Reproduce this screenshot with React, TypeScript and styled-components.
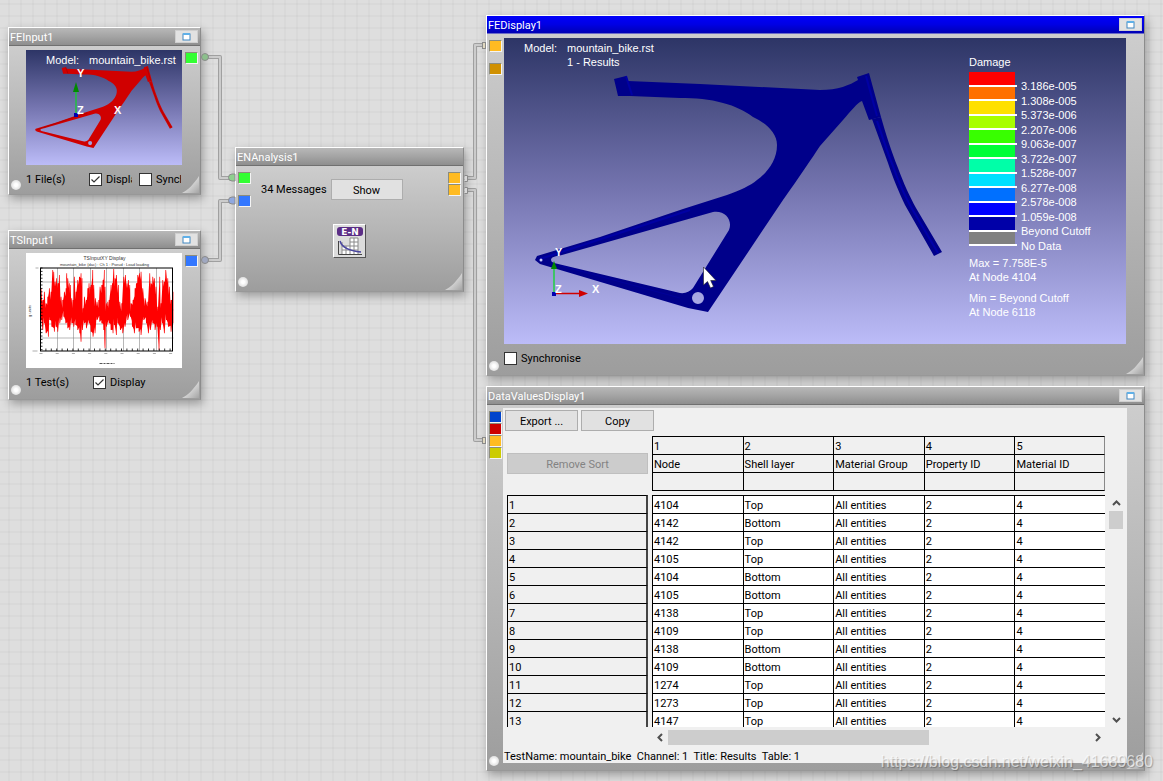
import React from "react";
import styled, { createGlobalStyle, css } from "styled-components";

const uiFont = 'Roboto, "Noto Sans", sans-serif';
const viewFont = '"Liberation Sans", Arial, sans-serif';

const GlobalStyle = createGlobalStyle`
  *, *::before, *::after { box-sizing: border-box; }
  body { margin: 0; font-family: ${uiFont}; font-size: 11px; line-height: 15px; color: #000; }
  button, input { font: inherit; }
`;

/* ---------- workspace ---------- */

const Workspace = styled.main`
  position: relative;
  min-height: 100vh;
  min-width: 1000px;
  overflow: hidden;
  background-color: #dedede;
  background-image:
    linear-gradient(rgba(0, 0, 0, 0.025) 2px, transparent 2px),
    linear-gradient(90deg, rgba(0, 0, 0, 0.025) 2px, transparent 2px);
  background-size: 12px 12px;
  background-position: 8px 3px;
`;

const Wires = styled.svg`
  position: absolute;
  inset: 0;
  width: 100%;
  height: 100%;
  pointer-events: none;
`;

/* ---------- window chrome ---------- */

const Frame = styled.section<{ $x: number; $y: number; $width?: number; $right?: number }>`
  position: absolute;
  left: ${(p) => p.$x}px;
  top: ${(p) => p.$y}px;
  ${(p) => (p.$width ? css`width: ${p.$width}px;` : css`right: ${p.$right}px;`)}
  border: 1px solid;
  border-color: #fff #8c8c8c #989898 #fff;
  box-shadow: 2px 4px 9px rgba(0, 0, 0, 0.3);
`;

const TitleBar = styled.header<{ $active?: boolean }>`
  display: flex;
  align-items: center;
  justify-content: space-between;
  height: 18px;
  padding: 0 2px 0 1px;
  color: #fff;
  border-bottom: 1px solid ${(p) => (p.$active ? "#6a6ac8" : "#707070")};
  background: ${(p) =>
    p.$active
      ? "linear-gradient(#0000fa, #0000e4 50%, #0000b4)"
      : "linear-gradient(#b8b8b8, #a4a4a4 50%, #8e8e8e)"};
`;

const Title = styled.h2`
  margin: 0;
  padding-top: 1px;
  font-size: 11px;
  font-weight: 400;
`;

const RestoreButton = styled.button`
  display: flex;
  align-items: center;
  justify-content: center;
  width: 23px;
  height: 13px;
  padding: 0;
  border: 1px solid #cfcfcf;
  background: #e2e2e2;
`;

const Body = styled.div<{ $flat?: boolean }>`
  display: grid;
  grid-template-columns: 17px minmax(0, 1fr) ${(p) => (p.$flat ? 17 : 18)}px;
  background: linear-gradient(#cdcdcd, #b6b6b6 50%, #9d9d9d);
`;

const Rail = styled.div<{ $side: "left" | "right" }>`
  display: flex;
  flex-direction: column;
  align-items: ${(p) => (p.$side === "left" ? "flex-start" : "flex-end")};
  padding: 6px ${(p) => (p.$side === "left" ? "0 4px 2px" : "0 0 3px")};
`;

const Port = styled.span<{ $color: string; $skip?: boolean }>`
  width: 13px;
  height: 12px;
  flex: none;
  margin: ${(p) => (p.$skip ? 11 : 0)}px 2px 0 0;
  border: 1px solid;
  border-color: #8c8c7c #f4f4f4 #f4f4f4 #8c8c7c;
  background: ${(p) => p.$color};
`;

const Lamp = styled.span`
  width: 10px;
  height: 10px;
  margin-top: auto;
  border-radius: 50%;
  background: radial-gradient(#fff 20%, #e6e6e6 60%, #cacaca);
`;

const GripSvg = styled.svg`
  margin-top: auto;
  display: block;
`;

const Grip = () => (
  <GripSvg width="18" height="18" viewBox="0 0 18 18" aria-hidden="true">
    <defs>
      <linearGradient id="grip" x1="0.4" y1="0.4" x2="1" y2="1">
        <stop offset="0" stopColor="#e0e0e0" />
        <stop offset="1" stopColor="#a4a4a4" />
      </linearGradient>
    </defs>
    <path d="M17 0V17H0C6 14 12 8 17 0Z" fill="url(#grip)" />
  </GripSvg>
);

type PortSpec = { color: string; skip?: boolean };

type NodeProps = {
  title: string;
  x: number;
  y: number;
  width?: number;
  right?: number;
  active?: boolean;
  flat?: boolean;
  restorable?: boolean;
  inputs?: PortSpec[];
  outputs?: PortSpec[];
  children: React.ReactNode;
};

const NodeWindow = ({
  title, x, y, width, right, active, flat, restorable = true, inputs = [], outputs = [], children,
}: NodeProps) => (
  <Frame $x={x} $y={y} $width={width} $right={right}>
    <TitleBar $active={active}>
      <Title>{title}</Title>
      {restorable && (
        <RestoreButton aria-label={`Restore ${title}`}>
          <svg width="9" height="8" viewBox="0 0 9 8" aria-hidden="true">
            <rect x="1" y="1" width="7" height="6" fill="#fff" stroke="#3f86c0" />
            <path d="M1 1H8" stroke="#5fb0e8" strokeWidth="2" />
          </svg>
        </RestoreButton>
      )}
    </TitleBar>
    <Body $flat={flat}>
      <Rail $side="left">
        {inputs.map((p, i) => <Port key={i} $color={p.color} $skip={p.skip} />)}
        <Lamp />
      </Rail>
      {children}
      <Rail $side="right">
        {outputs.map((p, i) => <Port key={i} $color={p.color} $skip={p.skip} />)}
        <Grip />
      </Rail>
    </Body>
  </Frame>
);

/* ---------- shared controls ---------- */

const PushButton = styled.button<{ $width: number }>`
  width: ${(p) => p.$width}px;
  height: 21px;
  padding: 1px 0 0;
  border: 1px solid #adadad;
  background: #e1e1e1;
  color: #000;
  &:disabled { background: #cccccc; border-color: #bfbfbf; color: #838383; }
`;

const CheckLabel = styled.label<{ $width?: number }>`
  display: flex;
  align-items: center;
  gap: 4px;
  overflow: hidden;
  white-space: nowrap;
  flex: none;
  ${(p) => p.$width && css`width: ${p.$width}px;`}
`;

const CheckInput = styled.input`
  appearance: none;
  flex: none;
  width: 13px;
  height: 13px;
  margin: 0;
  border: 1px solid #333;
  background: #fff;
  &:checked {
    background: #fff url("data:image/svg+xml,%3Csvg xmlns='http://www.w3.org/2000/svg' viewBox='0 0 11 11'%3E%3Cpath d='M1.5 5.5L4 8L9.5 2.5' fill='none' stroke='%23333' stroke-width='1.2'/%3E%3C/svg%3E");
  }
`;

const Check = ({ label, checked, width }: { label: string; checked?: boolean; width?: number }) => (
  <CheckLabel $width={width}>
    <CheckInput type="checkbox" defaultChecked={checked} />
    {label}
  </CheckLabel>
);

const Panel = styled.div<{ $roomy?: boolean }>`
  padding: 4px 0 ${(p) => (p.$roomy ? 2 : 0)}px;
`;

const Footer = styled.div`
  display: flex;
  align-items: center;
  height: 29px;
`;

const Count = styled.span<{ $width: number }>`
  flex: none;
  width: ${(p) => p.$width}px;
`;

const CheckPair = styled.div`
  display: flex;
  gap: 7px;
`;

/* ---------- model view ---------- */

const View = styled.div<{ $height: number }>`
  position: relative;
  height: ${(p) => p.$height}px;
  overflow: hidden;
  color: #fff;
  font-family: ${viewFont};
  line-height: 14px;
  background: linear-gradient(#2d3566, #7575b0 50%, #bcbcf8);
`;

const Scene = styled.svg`
  position: absolute;
  top: 0;
  left: 0;
  text { font: bold 11px ${viewFont}; fill: #fff; }
`;

const ModelInfo = styled.dl`
  position: relative;
  display: grid;
  grid-template-columns: 43px auto;
  margin: 0;
  padding: 3px 0 0 20px;
  dd { margin: 0; grid-column: 2; }
`;

const Bike = ({ fill, shade, light }: { fill: string; shade: string; light: string }) => (
  <g>
    <path
      fill={fill}
      fillRule="evenodd"
      d="M614 79L626 76L628 81L700 84L820 90C838 90 850 85 858 80L857 77L869 73L881 117L869 120L862 101C858 102 850 112 843 120L820 146C812 158 800 176 783 200L708 312L688 308L540 264L535 260L537 256L600 237L683 209L727 195C740 190 750 186 757 180C768 172 777 160 777 145C777 133 766 123 753 117C745 111 735 106 723 103C710 99 695 98 680 98L630 96L618 96Z
      M551 260C551 257 556 256 562 255L713 212C725 210 733 220 729 230L693 288Q688 294 680 293L554 263Q551 262 551 260Z
      M692 298A6 6 0 1 0 704 298A6 6 0 1 0 692 298Z"
    />
    <path fill={fill} d="M872 119L881 117C886 135 891 150 898 168C903 182 910 197 916 208L942 252L934 256L905 205C898 190 893 178 888 163Z" />
    <path d="M877 121C883 138 887 152 893 166C898 181 905 196 911 207L938 253" fill="none" stroke={light} strokeWidth="2" />
    <path d="M626 76L632 95M866 76L877 116M540 259L690 210" fill="none" stroke={shade} strokeWidth="2" />
    <path d="M562 266L680 298" fill="none" stroke={light} strokeWidth="1" opacity="0.5" />
  </g>
);

const LegendBox = styled.div`
  position: absolute;
  top: 17px;
  right: 0;
  width: 157px;
`;

const Scale = styled.div`
  display: grid;
  grid-template-columns: 52px auto;
  height: 174px;
  margin: 3px 0 10px;
`;

const Swatches = styled.div`
  display: grid;
  grid-template-rows: repeat(12, minmax(0, 1fr));
  height: 174px;
`;

const Swatch = styled.span<{ $color: string }>`
  width: 48px;
  border-bottom: 2px solid #fff;
  background: linear-gradient(${(p) => p.$color}, ${(p) => p.$color}) 0 0 / 46px 100% no-repeat padding-box;
`;

const ScaleLabels = styled.ul`
  display: grid;
  grid-template-rows: repeat(12, minmax(0, 1fr));
  height: 174px;
  margin: 7px 0 0;
  padding: 0;
  list-style: none;
  li { display: flex; align-items: center; }
`;

const Extreme = styled.p`
  margin: 0 0 7px;
  white-space: pre-line;
`;

const scale: [string, string][] = [
  ["#ff0000", "3.186e-005"],
  ["#ff7000", "1.308e-005"],
  ["#ffe000", "5.373e-006"],
  ["#a8ff00", "2.207e-006"],
  ["#38ff00", "9.063e-007"],
  ["#00ff38", "3.722e-007"],
  ["#00ffa8", "1.528e-007"],
  ["#00e0ff", "6.277e-008"],
  ["#0070ff", "2.578e-008"],
  ["#0000ff", "1.059e-008"],
  ["#0000a8", "Beyond Cutoff"],
  ["#808080", "No Data"],
];

/* ---------- time series chart ---------- */

const Chart = styled.svg`
  display: block;
  width: 100%;
  height: 115px;
  background: #fff;
  font-family: ${viewFont};
`;

const peaks = [
  120,205,125,240,130,215,135,250,140,230,145,205,150,215,155,150,158,155,162,185,166,175,170,190,175,165,
  180,230,185,240,190,215,195,205,197,160,200,175,205,190,208,195,212,235,216,240,220,170,225,215,230,180,
  235,170,240,160,243,175,246,265,250,230,256,240,260,205,264,190,267,200,270,195,275,150,278,195,283,235,
  288,245,293,240,297,200,302,195,306,180,310,150,312,200,316,250,320,245,324,240,330,195,334,190,338,147,
  342,175,346,165,352,195,356,245,362,250,368,170,373,165,378,190,382,180,386,195,390,250,396,240,402,205,
  406,190,410,165,415,160,420,155,425,205,432,235,440,245,446,160,450,190,455,170,460,175,465,200,470,260,
  476,170,480,250,485,180,490,185,494,150,500,175,505,200,510,240,516,215,
];

const troughs = [
  120,300,125,330,130,310,135,340,142,350,146,300,152,320,160,335,165,320,170,335,176,310,182,300,188,290,
  194,310,200,325,206,330,212,310,218,320,224,315,230,330,236,340,240,365,244,330,250,310,256,325,264,310,
  270,335,276,350,282,340,288,300,296,305,302,310,308,330,312,385,316,320,324,310,330,330,336,340,340,315,
  346,345,350,310,358,330,365,340,372,320,380,300,388,290,394,320,400,340,406,325,414,335,420,345,428,300,
  436,310,442,340,448,330,455,310,462,330,468,320,474,390,478,330,484,310,490,340,496,300,502,320,510,335,
  516,310,
];

/* Each sample becomes a narrow spike with a shallower notch beside it. */
const spikes = (data: number[], notch: number) => {
  const points: string[] = [];
  for (let i = 0; i < data.length; i += 2) {
    const x = data[i] / 3 - 26;
    const y = (data[i + 1] - 99) / 3;
    const depth = notch * (i % 4 === 0 ? 1 : 0.6);
    points.push(`${x.toFixed(1)},${(y + depth).toFixed(1)}`);
    points.push(`${(x + 0.2).toFixed(1)},${y.toFixed(1)}`);
    points.push(`${(x + 0.9).toFixed(1)},${y.toFixed(1)}`);
  }
  return points;
};

const signal = [...spikes(peaks, 8), ...spikes(troughs, -6).reverse()].join(" ");
const ticks = Array.from({ length: 25 }, (_, i) => 14 + i * 5.4);

const SignalChart = () => (
  <Chart viewBox="0 0 155 115" role="img" aria-label="TSInput XY Display">
    <text x="78" y="7" fontSize="5" textAnchor="middle" fill="#333">TSInputXY Display</text>
    <text x="78" y="13" fontSize="4" textAnchor="middle" fill="#333">mountain_bike (dac) : Ch 1 : Pseud : Load loading</text>
    <path d="M14 29H147M14 57H147M14 71H147M14 85H147M31 15V98M47 15V98M64 15V98M80 15V98M97 15V98M113 15V98M130 15V98" stroke="#888" strokeWidth="0.6" />
    <polygon points={signal} fill="#f00" />
    <rect x="14" y="15" width="132" height="83" fill="none" stroke="#000" />
    {ticks.map((x) => <path key={x} d={`M${x} 98v-2.5M14 ${15 + (x - 14) * 0.63}h2`} stroke="#000" strokeWidth="0.8" />)}
    {ticks.filter((_, i) => i % 3 === 0).map((x) => <path key={x} d={`M${x - 1} 100.500h3`} stroke="#777" strokeWidth="0.6" />)}
    <path d="M9 15h3M6 98h5" stroke="#777" strokeWidth="0.6" />
    <text x="4" y="58" fontSize="4" textAnchor="middle" fill="#333" transform="rotate(-90 4 58)">g units</text>
    <path d="M73 110.500h15" stroke="#555" strokeWidth="1" strokeDasharray="3 1 2 1" />
  </Chart>
);

/* ---------- analysis node ---------- */

const Analysis = styled.div`
  display: flex;
  flex-direction: column;
  align-items: center;
  gap: 24px;
  padding: 13px 0 33px;
`;

const MessageRow = styled.div`
  display: flex;
  align-items: center;
  align-self: flex-start;
  gap: 4px;
  padding-left: 8px;
`;

const IconButton = styled.button`
  display: block;
  width: 33px;
  height: 34px;
  padding: 0;
  border: 1px solid;
  border-color: #fff #555 #555 #fff;
  background: #dcdcdc;
`;

/* ---------- data table ---------- */

const Sheet = styled.div`
  display: grid;
  grid-template-columns: 141px minmax(0, 1fr) 14px;
  column-gap: 4px;
  margin: 3px 0 7px -1px;
  padding: 0 4px;
  background: #f0f0f0;
`;

const Toolbar = styled.div`
  grid-column: 1 / -1;
  display: flex;
  gap: 3px;
  height: 28px;
  margin-left: -2px;
  padding-top: 2px;
`;

const RowPane = styled.div`
  height: 291px;
  padding-top: 17px;
  overflow: hidden;
`;

const DataPane = styled.div`
  height: 291px;
  overflow: hidden;
`;

const Grid = styled.table`
  width: 100%;
  table-layout: fixed;
  border-spacing: 0;
  th, td {
    height: 18px;
    padding: 1px 0 0 1px;
    text-align: left;
    font-weight: 400;
    white-space: nowrap;
    border: 0 solid #000;
    border-width: 1px 0 0 1px;
  }
  thead tr:last-child th { height: 19px; border-bottom-width: 1px; }
  thead th:last-child { border-right: 1px solid #888; }
  tbody td { background: #fff; }
`;

const Spacer = styled.tr`
  && td { height: 4px; padding: 0; border: 0; background: #f0f0f0; line-height: 0; }
`;

const RowNumbers = styled(Grid)`
  margin-top: 21px;
  th { border-right: 2px solid #444; }
`;

const VScroll = styled.div`
  display: flex;
  flex-direction: column;
  align-items: center;
  padding-top: 59px;
`;

const HScroll = styled.div`
  grid-column: 2;
  display: flex;
  align-items: center;
  height: 15px;
  margin-top: 3px;
`;

const ArrowButton = styled.button`
  display: flex;
  align-items: center;
  justify-content: center;
  width: 16px;
  height: 16px;
  padding: 0;
  border: 0;
  background: none;
`;

const Track = styled.div`
  flex: 1;
  align-self: stretch;
`;

const Thumb = styled.div<{ $vertical?: boolean }>`
  background: #cdcdcd;
  ${(p) => (p.$vertical ? css`height: 18px;` : css`width: 62%; height: 15px;`)}
`;

const Arrow = ({ d, label }: { d: string; label: string }) => (
  <ArrowButton aria-label={label}>
    <svg width="9" height="9" viewBox="0 0 9 9" aria-hidden="true">
      <path d={d} fill="none" stroke="#505050" strokeWidth="2" />
    </svg>
  </ArrowButton>
);

const Status = styled.p`
  grid-column: 1 / -1;
  margin: 4px 0 0 -3px;
  height: 14px;
  white-space: pre;
`;

const columns = ["Node", "Shell layer", "Material Group", "Property ID", "Material ID"];
const rows: [string, string][] = [
  ["4104", "Top"], ["4142", "Bottom"], ["4142", "Top"], ["4105", "Top"], ["4104", "Bottom"],
  ["4105", "Bottom"], ["4138", "Top"], ["4109", "Top"], ["4138", "Bottom"], ["4109", "Bottom"],
  ["1274", "Top"], ["1273", "Top"], ["4147", "Top"],
];

const Watermark = styled.span`
  position: absolute;
  right: 10px;
  bottom: 9px;
  font: 16px/20px ${viewFont};
  color: rgba(255, 255, 255, 0.65);
  text-shadow: 1px 1px 1px rgba(0, 0, 0, 0.25);
`;

/* ---------- connections ---------- */

const Pipe = ({ d }: { d: string }) => (
  <g fill="none" strokeLinejoin="round">
    <path d={d} stroke="#a0a0a0" strokeWidth="4" />
    <path d={d} stroke="#cccccc" strokeWidth="2" />
  </g>
);

const GREEN = "#33ff33";
const BLUE = "#3377ff";
const ORANGE = "#ffbb22";

export default function App() {
  return (
    <>
      <GlobalStyle />
      <Workspace>
        <Wires aria-hidden="true">
          <Pipe d="M205 57H220V178H231" />
          <Pipe d="M205 260H220V201H231" />
          <Pipe d="M464 178H475V45H484" />
          <Pipe d="M464 190H475V440H484" />
        </Wires>

        <NodeWindow title="FEInput1" x={8} y={27} width={193} outputs={[{ color: GREEN }]}>
          <Panel>
            <View $height={115}>
              <Scene width="155" height="115" viewBox="26 50 155 115" aria-hidden="true">
                <g transform="translate(-145.8 40.900) scale(0.338 0.343)">
                  <Bike fill="#d00000" shade="#a80000" light="#b00000" />
                </g>
                <path d="M76 115V92" stroke="#20c040" strokeWidth="1.5" />
                <path d="M73 92L76 82L79 92Z" fill="#008a00" />
                <rect x="74" y="113" width="4" height="4" fill="#0000b0" />
                <text x="77" y="77">Y</text>
                <text x="77" y="114">Z</text>
                <text x="114" y="114">X</text>
              </Scene>
              <ModelInfo>
                <dt>Model:</dt>
                <dd>mountain_bike.rst</dd>
              </ModelInfo>
            </View>
            <Footer>
              <Count $width={63}>1 File(s)</Count>
              <CheckPair>
                <Check label="Display" checked width={43} />
                <Check label="Synchronise" width={42} />
              </CheckPair>
            </Footer>
          </Panel>
        </NodeWindow>

        <NodeWindow title="TSInput1" x={8} y={230} width={193} outputs={[{ color: BLUE }]}>
          <Panel $roomy>
            <SignalChart />
            <Footer>
              <Count $width={67}>1 Test(s)</Count>
              <Check label="Display" checked />
            </Footer>
          </Panel>
        </NodeWindow>

        <NodeWindow
          title="ENAnalysis1"
          x={235}
          y={147}
          width={229}
          restorable={false}
          inputs={[{ color: GREEN }, { color: BLUE, skip: true }]}
          outputs={[{ color: ORANGE }, { color: ORANGE }]}
        >
          <Analysis>
            <MessageRow>
              <span>34 Messages</span>
              <PushButton $width={72}>Show</PushButton>
            </MessageRow>
            <IconButton aria-label="E-N analysis">
              <svg width="31" height="32" viewBox="0 0 31 32" aria-hidden="true">
                <rect x="3" y="2" width="26" height="9" rx="3" fill="#5b2d86" />
                <text x="16" y="10" textAnchor="middle" fontFamily="DejaVu Sans" fontWeight="700" fontSize="9" fill="#fff">E-N</text>
                <path d="M16 13H24V29H8V21H16Z" fill="#fff" />
                <path d="M8 17V29M12 21V29M16 13V29M20 13V29M24 13V29M16 13H24M16 17H24M8 21H24M8 25H24" stroke="#8a8a8a" fill="none" />
                <path d="M4.500 16V29.500H28" stroke="#444" fill="none" />
                <path d="M6 16C8 23 17 26 27 27" stroke="#4a46a0" strokeWidth="1.5" fill="none" />
              </svg>
            </IconButton>
          </Analysis>
        </NodeWindow>

        <NodeWindow
          title="FEDisplay1"
          x={486}
          y={15}
          right={18}
          active
          inputs={[{ color: ORANGE }, { color: "#d09000", skip: true }]}
        >
          <Panel $roomy>
            <View $height={306}>
              <Scene width="622" height="306" viewBox="504 38 622 306" aria-hidden="true">
                <Bike fill="#00008a" shade="#0000a4" light="#0000a8" />
                <circle cx="541" cy="260" r="1.500" fill="#c8c8f8" />
                <path d="M554 293V266" stroke="#20d040" strokeWidth="1.5" />
                <path d="M551 269L554 261L557 269Z" fill="#008a00" />
                <path d="M554 293.500H580" stroke="#d00000" strokeWidth="1.5" />
                <path d="M579 290L588 293.500L579 297Z" fill="#d00000" />
                <rect x="552" y="292" width="4" height="4" fill="#0000b0" />
                <text x="555" y="256">Y</text>
                <text x="555" y="293">Z</text>
                <text x="592" y="293">X</text>
                <path d="M703.500 267V285L707.500 281.500L710.500 288L713.500 286.500L710.700 280.500H716Z" fill="#fff" stroke="#222" strokeWidth="0.6" />
              </Scene>
              <ModelInfo>
                <dt>Model:</dt>
                <dd>mountain_bike.rst</dd>
                <dd>1 - Results</dd>
              </ModelInfo>
              <LegendBox>
                <div>Damage</div>
                <Scale>
                  <Swatches>
                    {scale.map(([color]) => <Swatch key={color} $color={color} />)}
                  </Swatches>
                  <ScaleLabels>
                    {scale.map(([, label]) => <li key={label}>{label}</li>)}
                  </ScaleLabels>
                </Scale>
                <Extreme>{"Max = 7.758E-5\nAt Node 4104"}</Extreme>
                <Extreme>{"Min = Beyond Cutoff\nAt Node 6118"}</Extreme>
              </LegendBox>
            </View>
            <Footer>
              <Check label="Synchronise" />
            </Footer>
          </Panel>
        </NodeWindow>

        <NodeWindow
          title="DataValuesDisplay1"
          x={486}
          y={386}
          right={18}
          flat
          inputs={[{ color: "#0044cc" }, { color: "#cc0000" }, { color: ORANGE }, { color: "#cccc00" }]}
        >
          <Sheet>
            <Toolbar>
              <PushButton $width={73}>Export ...</PushButton>
              <PushButton $width={73}>Copy</PushButton>
            </Toolbar>
            <RowPane>
              <PushButton $width={141} disabled>Remove Sort</PushButton>
              <RowNumbers>
                <tbody>
                  {rows.map((_, i) => <tr key={i}><th scope="row">{i + 1}</th></tr>)}
                </tbody>
              </RowNumbers>
            </RowPane>
            <DataPane>
              <Grid>
                <thead>
                  <tr>{columns.map((c, i) => <th key={c}>{i + 1}</th>)}</tr>
                  <tr>{columns.map((c) => <th key={c} scope="col">{c}</th>)}</tr>
                  <tr>{columns.map((c) => <th key={c} />)}</tr>
                </thead>
                <tbody>
                  <Spacer><td colSpan={5} /></Spacer>
                  {rows.map(([node, layer], i) => (
                    <tr key={i}>
                      <td>{node}</td>
                      <td>{layer}</td>
                      <td>All entities</td>
                      <td>2</td>
                      <td>4</td>
                    </tr>
                  ))}
                </tbody>
              </Grid>
            </DataPane>
            <VScroll>
              <Arrow label="Scroll up" d="M1 6L4.500 2.500L8 6" />
              <Track><Thumb $vertical>&nbsp;</Thumb></Track>
              <Arrow label="Scroll down" d="M1 3L4.500 6.500L8 3" />
            </VScroll>
            <HScroll>
              <Arrow label="Scroll left" d="M6 1L2.500 4.500L6 8" />
              <Track><Thumb /></Track>
              <Arrow label="Scroll right" d="M3 1L6.500 4.500L3 8" />
            </HScroll>
            <Status>{"TestName: mountain_bike  Channel: 1  Title: Results  Table: 1"}</Status>
          </Sheet>
        </NodeWindow>

        <Wires aria-hidden="true">
          <g stroke="#8a8a8a" strokeWidth="1">
            <circle cx="205" cy="57" r="3.500" fill="#8cc08c" />
            <circle cx="205" cy="260" r="3.500" fill="#a0a8c0" />
            <path d="M235 174H232A3.500 3.500 0 0 0 232 181H235Z" fill="#8fd08f" />
            <path d="M235 197H232A3.500 3.500 0 0 0 232 204H235Z" fill="#8fa8e0" />
            <path d="M464.500 175.500H467.500V181.500H464.500M464.500 187.500H467.500V193.500H464.500" fill="#d8d8d8" />
            <rect x="482.500" y="42.500" width="3" height="6" fill="#e0d8c0" />
            <rect x="482.500" y="437.500" width="3" height="6" fill="#e0d8c0" />
          </g>
        </Wires>

        <Watermark>https://blog.csdn.net/weixin_41689680</Watermark>
      </Workspace>
    </>
  );
}
